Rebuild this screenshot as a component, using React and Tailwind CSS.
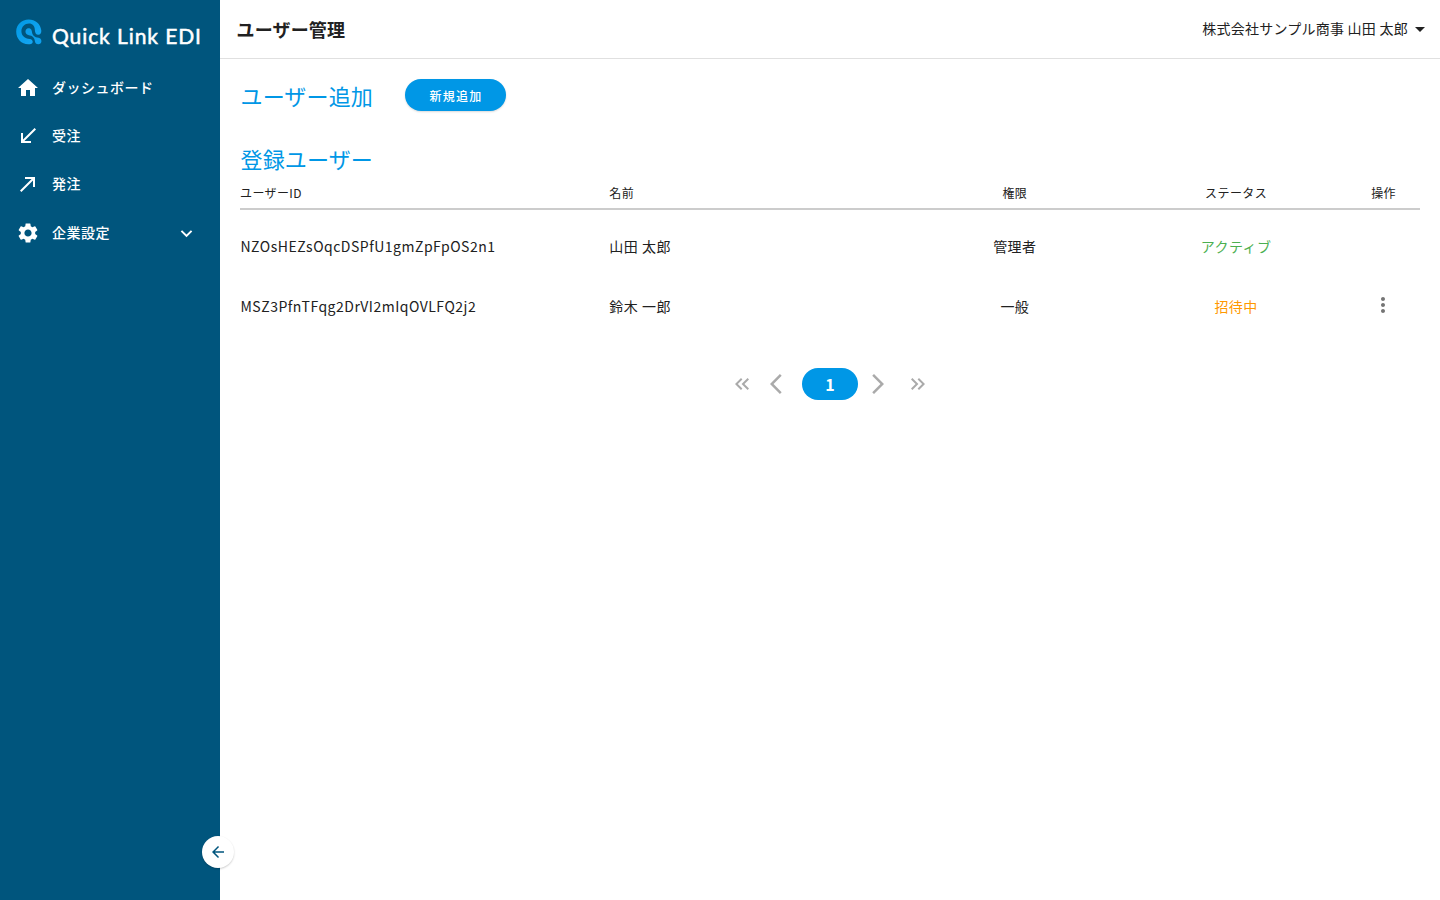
import {
  MdArrowBack,
  MdArrowBackIos,
  MdArrowDropDown,
  MdArrowForwardIos,
  MdCallMade,
  MdCallReceived,
  MdExpandMore,
  MdHome,
  MdKeyboardDoubleArrowLeft,
  MdKeyboardDoubleArrowRight,
  MdMoreVert,
  MdSettings,
} from "react-icons/md";

const menuItems = [
  { label: "ダッシュボード", icon: MdHome },
  { label: "受注", icon: MdCallReceived },
  { label: "発注", icon: MdCallMade },
  { label: "企業設定", icon: MdSettings, expandable: true },
];

const users = [
  {
    id: "NZOsHEZsOqcDSPfU1gmZpFpOS2n1",
    name: "山田 太郎",
    role: "管理者",
    status: "アクティブ",
    statusColor: "text-[#4caf50]",
    hasMenu: false,
  },
  {
    id: "MSZ3PfnTFqg2DrVI2mIqOVLFQ2j2",
    name: "鈴木 一郎",
    role: "一般",
    status: "招待中",
    statusColor: "text-[#ff9800]",
    hasMenu: true,
  },
];

function Logo() {
  return (
    <div className="flex h-16 items-start pl-4 pt-[19px]">
      <svg className="h-[26px] w-[26px] shrink-0" viewBox="0 0 26 26" fill="none">
        <defs>
          <linearGradient id="logo" x1="0" y1="0" x2="1" y2="1">
            <stop offset="0" stopColor="#0099e5" />
            <stop offset="1" stopColor="#18a8f5" />
          </linearGradient>
        </defs>
        <path
          d="M12.6 0.6C5.8 0.6 0.2 5.8 0.2 12.7C0.2 19.6 5.6 25.3 12.2 25.3H13.8C15.6 25.3 16.7 24.2 16.7 22.8C16.7 21.2 15.5 20.3 13.9 20C8.6 19.6 5.4 16.6 5.4 12.3C5.4 7.9 8.8 4.6 13 4.6C16.6 4.6 18.6 7 18.8 10.4C18.9 13.8 20 15.8 22.3 15.8C24.4 15.8 25.5 14 25.3 11.6C24.6 5 19.2 0.6 12.6 0.6Z"
          fill="url(#logo)"
        />
        <path
          d="M15.2 10.6C16.4 12.8 15.6 14.6 17.4 16.6C19 18.4 20.6 18.4 22.6 18.8C24.5 19.2 25.6 20.6 25.4 22.6C25.2 24.4 23.8 25.4 22.2 25.3C20.2 25.2 19.2 24 18.9 22.2C18.6 20.2 18 18.8 16.4 17.6C14.6 16.3 13.4 16.6 11.6 15.8C9.6 14.8 9 12.8 9.8 11C10.8 8.9 13.8 8.6 15.2 10.6Z"
          fill="#0d9fec"
        />
      </svg>
      <svg className="ml-[10px] mt-1 h-7 w-[152px]" viewBox="0 0 152 28">
        <text
          x="0"
          y="20.7"
          textLength="149"
          fill="white"
          stroke="white"
          strokeWidth="0.5"
          className="font-['Lato',sans-serif] text-[21px]"
        >
          Quick Link EDI
        </text>
      </svg>
    </div>
  );
}

function Sidebar() {
  return (
    <aside className="relative w-[220px] shrink-0 bg-[#00557d] text-white">
      <Logo />
      <nav>
        {menuItems.map(({ label, icon: Icon, expandable }) => (
          <a key={label} className="flex h-12 items-center pl-4 pr-[22px] last:h-[49px] last:pt-px">
            <Icon className="size-6 shrink-0" />
            <span className="ml-3 flex-1 pb-0.5 text-[14px] font-medium tracking-[0.5px]">
              {label}
            </span>
            {expandable && <MdExpandMore className="size-[23px]" />}
          </a>
        ))}
      </nav>
      {/* Collapse toggle */}
      <button className="absolute bottom-8 -right-[14px] flex size-8 items-center justify-center rounded-full bg-white text-[#00557d] shadow-[0_1px_2px_rgba(0,0,0,0.2)]">
        <MdArrowBack className="size-[18px]" />
      </button>
    </aside>
  );
}

function UserTable() {
  return (
    <div>
      <div className="grid h-[34px] grid-cols-[5fr_4fr_3fr_3fr_1fr] items-center border-b-2 border-[#cccccc] pt-0.5 text-[12px] tracking-[0.4px]">
        <div>ユーザーID</div>
        <div className="pl-[0.5px]">名前</div>
        <div className="pl-px text-center">権限</div>
        <div className="pl-px text-center">ステータス</div>
        <div className="pl-px text-center">操作</div>
      </div>
      <div className="pt-[6px]">
        {users.map((user) => (
          <div
            key={user.id}
            className="grid h-[60px] grid-cols-[5fr_4fr_3fr_3fr_1fr] items-center text-[14px] tracking-[0.5px]"
          >
            <div className="pl-[0.5px]">{user.id}</div>
            <div className="pl-[0.5px]">{user.name}</div>
            <div className="pl-px text-center">{user.role}</div>
            <div className={`pl-px text-center ${user.statusColor}`}>{user.status}</div>
            <div className="flex justify-center pb-0.5">
              {user.hasMenu && <MdMoreVert className="size-6 text-[#757575]" />}
            </div>
          </div>
        ))}
      </div>
    </div>
  );
}

function Pagination() {
  return (
    <div className="mt-8 flex h-8 items-center justify-center text-[#aaaaaa]">
      <MdKeyboardDoubleArrowLeft className="size-6" />
      <MdArrowBackIos className="ml-4 size-6" />
      <button className="ml-2 flex h-8 w-14 items-center justify-center rounded-full bg-[#0097e6] text-[16px] font-bold text-white">
        1
      </button>
      <MdArrowForwardIos className="ml-2 size-6" />
      <MdKeyboardDoubleArrowRight className="ml-4 size-6" />
    </div>
  );
}

export default function App() {
  return (
    <div className="flex h-screen overflow-hidden bg-white font-['Noto_Sans_CJK_JP',sans-serif] text-[#212121]">
      <Sidebar />
      <div className="flex min-w-0 flex-1 flex-col">
        <header className="flex h-[59px] shrink-0 items-center justify-between border-b border-[#e0e0e0] pl-[16.5px] pr-2">
          <h1 className="text-[18px] font-bold tracking-[0.17px]">ユーザー管理</h1>
          <div className="flex items-center text-[14px] tracking-[0.25px]">
            <span className="pb-0.5">株式会社サンプル商事 山田 太郎</span>
            <MdArrowDropDown className="size-6" />
          </div>
        </header>
        <main className="px-5 pt-5">
          <div className="flex h-8 items-center">
            <h2 className="w-[133px] whitespace-nowrap pl-[0.5px] text-[22px] tracking-[0.15px] text-[#0097e6]">
              ユーザー追加
            </h2>
            <button className="ml-8 h-8 w-[101px] rounded-full bg-[#0097e6] pl-px pt-0.5 text-[12px] font-medium tracking-[1.25px] text-white shadow-[0_1px_2px_rgba(0,0,0,0.15)]">
              新規追加
            </button>
          </div>
          <h2 className="mt-[30px] h-[35px] pl-[0.5px] text-[22px] leading-[34px] tracking-[0.15px] text-[#0097e6]">
            登録ユーザー
          </h2>
          <UserTable />
          <Pagination />
        </main>
      </div>
    </div>
  );
}
